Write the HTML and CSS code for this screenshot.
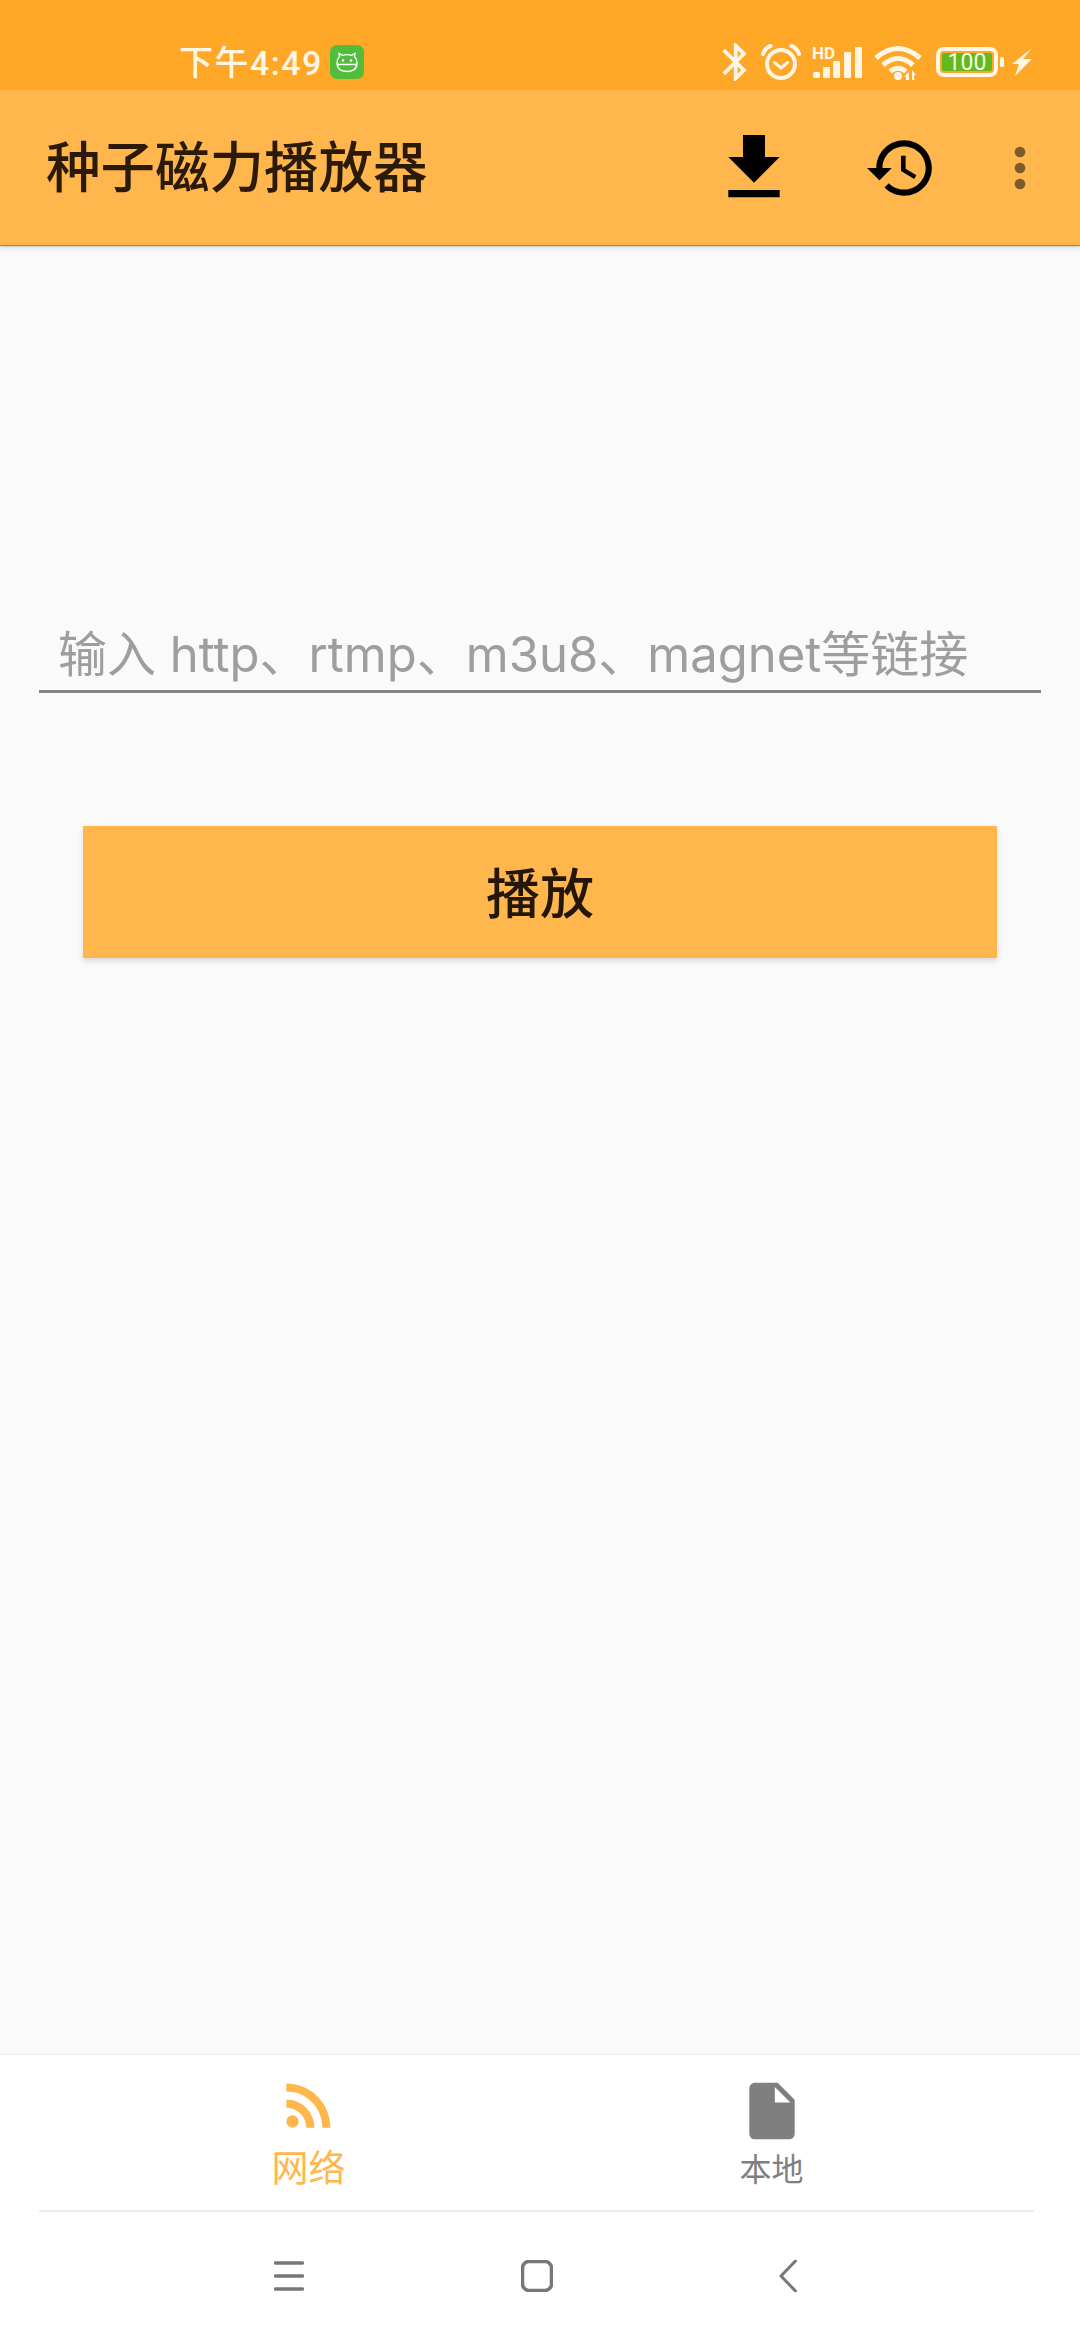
FILE: index.html
```html
<!DOCTYPE html>
<html lang="zh-CN">
<head>
<meta charset="utf-8">
<title>种子磁力播放器</title>
<link rel="stylesheet" href="styles.css">
</head>
<body>
<div class="page">
  <header class="status-bar">
    <span class="clock">下午4:49</span>
    <span class="app-badge">
      <svg viewBox="0 0 34 34" width="34" height="34"><path class="face" d="M9.500 11.500 9 8.500l3.500 1.800q4.500-1.300 9 0L25 8.500l-.5 3q2.500 2.500 2.500 6.500 0 8.500-10 8.500T7 18q0-4 2.500-6.500zM7.500 19.500h19"/><circle class="eye" cx="13" cy="15.500" r="1.200"/><circle class="eye" cx="21" cy="15.500" r="1.200"/></svg>
    </span>
    <div class="status-icons">
      <svg class="st-bt" viewBox="5 2 12.710 20" width="25" height="38"><path d="M17.710 7.710 12 2h-1v7.590L6.410 5 5 6.410 10.590 12 5 17.590 6.410 19 11 14.410V22h1l5.710-5.710-4.300-4.290 4.300-4.290zM13 5.830l1.880 1.880L13 9.590V5.830zm1.880 10.460L13 18.170v-3.760l1.880 1.880z"/></svg>
      <svg class="st-alarm" viewBox="0 0 40 36" width="40" height="36"><circle class="ln" cx="20" cy="20" r="14"/><path class="ln thin" d="M13.500 18.500 20 24l6.500-5.500"/><path class="ln" d="M2 10Q4 4 9.500 2M38 10Q36 4 30.500 2"/></svg>
      <svg class="st-signal" viewBox="0 0 50 31" width="50" height="31"><text class="hd" x="0" y="12">HD</text><rect x="1" y="25" width="7" height="6" rx="1.500"/><rect x="11" y="20" width="7" height="11" rx="1"/><rect x="21" y="14" width="7" height="17" rx="1"/><rect x="32" y="5" width="7" height="26" rx="1"/><rect x="43" y="0" width="7" height="31" rx="1"/></svg>
      <svg class="st-wifi" viewBox="0 0 46 34" width="46" height="34"><path class="ln w5" d="M1 12Q23-7 45 12M8 19q15-13 30 0M15 25.500q8-6.500 16 0"/><circle cx="23" cy="30" r="4"/><path d="M34 26v8h-3v-3.500H29zM37 24l4 5h-1.800v5h-2.200z"/></svg>
      <svg class="st-batt" viewBox="0 0 69 30" width="69" height="30"><rect class="batt-shell" x="2" y="2" width="58" height="26" rx="6"/><rect class="batt-fill" x="6" y="6" width="50" height="18" rx="2"/><text class="batt-text" x="31" y="22.500">100</text><rect x="64" y="10" width="4" height="10" rx="1.500"/></svg>
      <svg class="st-bolt" viewBox="0 0 20 28" width="20" height="28"><path d="M20 0 11 11h9L3 28l4-12H0z"/></svg>
    </div>
  </header>

  <div class="app-bar">
    <h1 class="app-title">种子磁力播放器</h1>
    <svg class="act act-download" viewBox="0 0 24 24" width="88" height="88"><path d="M19 9h-4V3H9v6H5l7 7 7-7zM5 18v2h14v-2H5z"/></svg>
    <svg class="act act-history" viewBox="0 0 24 24" width="74" height="74"><path d="M13 3c-4.970 0-9 4.030-9 9H1l3.890 3.890.07.140L9 12H6c0-3.870 3.130-7 7-7s7 3.130 7 7-3.130 7-7 7c-1.930 0-3.680-.790-4.940-2.060l-1.420 1.420C8.270 19.990 10.510 21 13 21c4.970 0 9-4.030 9-9s-4.030-9-9-9zm-1 5v5l4.280 2.540.720-1.210-3.500-2.080V8H12z"/></svg>
    <svg class="act act-more" viewBox="0 0 24 24" width="64" height="64"><circle cx="12" cy="6" r="2"/><circle cx="12" cy="12" r="2"/><circle cx="12" cy="18" r="2"/></svg>
  </div>

  <main class="content">
    <div class="url-field">
      <span class="url-hint">输入 http、rtmp、m3u8、magnet等链接</span>
    </div>
    <button class="play-btn" type="button">播放</button>
  </main>

  <nav class="tabs">
    <div class="tab tab-active">
      <svg class="tab-icon" viewBox="0 0 24 24" width="68" height="68"><circle cx="6.180" cy="17.820" r="2.180"/><path d="M4 4.440v2.830c7.030 0 12.730 5.700 12.730 12.730h2.830c0-8.590-6.970-15.560-15.560-15.560zm0 5.660v2.830c3.900 0 7.070 3.170 7.070 7.070h2.830c0-5.470-4.430-9.900-9.900-9.900z"/></svg>
      <span class="tab-label">网络</span>
    </div>
    <div class="tab">
      <svg class="tab-icon" viewBox="0 0 24 24" width="68" height="68"><path d="M6 2c-1.100 0-1.990.9-1.990 2L4 20c0 1.100.89 2 1.990 2H18c1.100 0 2-.9 2-2V8l-6-6H6zm7 7V3.500L18.500 9H13z"/></svg>
      <span class="tab-label">本地</span>
    </div>
  </nav>

  <div class="sys-nav">
    <div class="sys-rule"></div>
    <div class="sys-keys">
      <svg class="key-menu" viewBox="0 0 30 30" width="30" height="30"><path d="M1.500 2h27M1.500 15h27M1.500 28h27"/></svg>
      <svg class="key-home" viewBox="0 0 32 32" width="32" height="32"><rect x="1.500" y="1.500" width="29" height="29" rx="6.500"/></svg>
      <svg class="key-back" viewBox="0 0 18 32" width="18" height="32"><path d="M16.500 1 2 16l14.500 15"/></svg>
    </div>
  </div>
</div>
</body>
</html>
```
FILE: styles.css
```css
* { box-sizing: border-box; }
html, body { margin: 0; padding: 0; }
body {
  width: 1080px;
  height: 2340px;
  overflow: hidden;
  font-family: "Roboto", "Noto Sans CJK SC", sans-serif;
  background: #fafafa;
}
.page { display: flex; flex-direction: column; height: 2340px; }

/* status bar */
.status-bar {
  flex: none;
  height: 90px;
  background: #ffa726;
  display: flex;
  align-items: flex-start;
  padding: 45px 48px 0 179px;
  color: #fff6e6;
}
.clock { font-size: 34px; line-height: 36px; font-weight: 500; letter-spacing: 1.500px; width: 151px; white-space: nowrap; }
.app-badge {
  width: 34px;
  height: 34px;
  border-radius: 7px;
  background: #52bd3b;
  display: block;
}
.app-badge svg { display: block; }
.face { fill: none; stroke: #fff; stroke-width: 1.400; }
.eye { fill: #fff; }
.status-icons { margin-left: auto; display: flex; align-items: flex-start; margin-top: -2px; }
.status-icons svg { display: block; fill: #fff6e6; flex: none; overflow: visible; }
.ln { fill: none; stroke: #fff6e6; stroke-width: 4; stroke-linecap: round; stroke-linejoin: round; }
.ln.thin { stroke-width: 3; }
.ln.w5 { stroke-width: 5; stroke-linecap: butt; }
.st-alarm { margin-left: 14px; margin-top: 1px; }
.st-signal { margin-left: 11px; margin-top: 4px; }
.st-wifi { margin-left: 13px; margin-top: 3px; }
.st-batt { margin-left: 15px; margin-top: 4px; }
.st-bolt { margin-left: 7px; margin-top: 5px; }
.hd { font-family: "Roboto", sans-serif; font-size: 17px; font-weight: 700; fill: #fff6e6; }
.batt-shell { fill: none; stroke: #fff6e6; stroke-width: 4; }
.batt-fill { fill: #62b81f; }
.batt-text { font-family: "Roboto", sans-serif; font-size: 23px; fill: #f2ffe0; text-anchor: middle; }

/* app bar */
.app-bar {
  flex: none;
  height: 155px;
  background: #ffb74d;
  display: flex;
  align-items: center;
  padding: 0 28px 0 46px;
  box-shadow: 0 1px 1px rgba(90, 60, 0, .55), 0 3px 5px rgba(0, 0, 0, .12);
  position: relative;
  z-index: 1;
}
.app-title {
  margin: 0 0 8px;
  font-size: 54.500px;
  line-height: 64px;
  font-weight: 500;
  color: #2a1a07;
  font-family: "Noto Sans CJK SC", sans-serif;
}
.act { display: block; flex: none; fill: #000; }
.act-download { margin-left: auto; }
.act-history { margin-left: 66px; }
.act-more { margin-left: 50px; opacity: .5; }

/* content */
.content { flex: 1; display: flex; flex-direction: column; align-items: center; background: #fafafa; }
.url-field {
  width: 1002px;
  margin-top: 375px;
  height: 73px;
  padding-left: 19px;
  border-bottom: 3px solid #858585;
  display: flex;
  align-items: flex-end;
}
.url-hint {
  font-family: "Inter", "Noto Sans CJK SC", sans-serif;
  font-size: 49px;
  line-height: 60px;
  color: #9e9e9e;
  white-space: nowrap;
  margin-bottom: 5px;
}
.play-btn {
  margin-top: 133px;
  width: 914px;
  height: 132px;
  border: 0;
  padding: 0 0 4px;
  background: #ffb74d;
  color: #24170a;
  font-family: "Noto Sans CJK SC", sans-serif;
  font-size: 54px;
  font-weight: 500;
  box-shadow: 0 3px 6px rgba(0, 0, 0, .14);
}

/* bottom tabs */
.tabs {
  flex: none;
  height: 155px;
  background: #fff;
  display: grid;
  grid-template-columns: 463px 463px;
  justify-content: center;
  box-shadow: 0 -1px 2px rgba(0, 0, 0, .06);
  position: relative;
}
.tab { display: flex; flex-direction: column; align-items: center; color: #7f7f7f; padding-top: 22px; }
.tab-icon { display: block; fill: #7f7f7f; }
.tab-label { font-size: 32px; line-height: 40px; margin-top: 5px; }
.tab-active { color: #ffb74d; padding-top: 16px; }
.tab-active .tab-icon { fill: #ffb74d; }
.tab-active .tab-label { font-size: 37px; line-height: 44px; margin-top: 9px; }

/* system navigation */
.sys-nav { flex: none; height: 130px; background: #fff; }
.sys-rule { height: 2px; margin: 0 46px 0 39px; background: #ececec; }
.sys-keys { display: flex; align-items: center; height: 128px; padding-left: 274px; }
.sys-keys svg { display: block; fill: none; stroke: #777; flex: none; }
.key-menu { stroke-width: 3.500; stroke-linecap: round; }
.key-home { stroke-width: 3.500; margin-left: 217px; }
.key-back { stroke-width: 3; stroke-linecap: round; stroke-linejoin: round; margin-left: 226px; }
```
